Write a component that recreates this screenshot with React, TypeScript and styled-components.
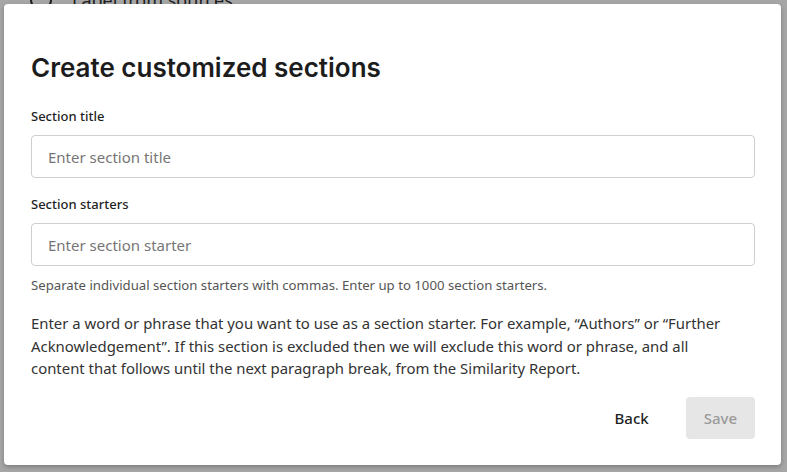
import React from "react";
import styled, { createGlobalStyle } from "styled-components";

const Global = createGlobalStyle`
  html, body { margin: 0; padding: 0; }
  body {
    width: 787px;
    height: 472px;
    overflow: hidden;
    background: #ffffff;
    font-family: "Noto Sans", "Open Sans", sans-serif;
  }
`;

const Page = styled.div`
  position: relative;
  width: 787px;
  height: 472px;
  overflow: hidden;
`;

const BackPage = styled.div`
  padding: 0 0 0 75px;
  margin-top: -12px;
  font-family: "Noto Sans", sans-serif;
  font-size: 18px;
  color: #333;
  display: flex;
  align-items: center;
  gap: 20px;
`;

const Radio = styled.span`
  width: 18px;
  height: 18px;
  border: 2px solid #333;
  border-radius: 50%;
  margin-left: -45px;
`;

const Overlay = styled.div`
  position: absolute;
  inset: 0;
  background: rgba(0, 0, 0, 0.35);
  display: flex;
  align-items: flex-start;
  justify-content: flex-start;
  padding: 4px 6px 7px 4px;
  box-sizing: border-box;
`;

const Dialog = styled.div`
  width: 777px;
  height: 461px;
  box-sizing: border-box;
  background: #fff;
  border-radius: 4px;
  box-shadow: 0 2px 4px rgba(0, 0, 0, 0.25);
  padding: 44px 26px 26px 27px;
  display: flex;
  flex-direction: column;
`;

const Title = styled.h1`
  margin: 0 0 19px;
  font-family: "Inter", "Lato", sans-serif;
  font-weight: 600;
  font-size: 26px;
  line-height: 40px;
  color: #1c1c1c;
  letter-spacing: 0;
`;

const Label = styled.label`
  display: block;
  font-size: 13px;
  font-weight: 500;
  line-height: 18px;
  color: #1f1f1f;
  margin-bottom: 10px;
`;

const Field = styled.div`
  display: flex;
  flex-direction: column;
  margin-bottom: 17px;
`;

const Input = styled.input`
  box-sizing: border-box;
  width: 100%;
  height: 43px;
  border: 1px solid #cfcfcf;
  border-radius: 4px;
  padding: 0 16px;
  font-family: "Noto Sans", sans-serif;
  font-size: 15px;
  color: #1f1f1f;
  outline: none;
  &::placeholder { color: #767676; }
`;

const Help = styled.p`
  margin: -7px 0 18px;
  font-size: 13.2px;
  line-height: 18px;
  color: #555;
`;

const Body = styled.p`
  margin: 0;
  max-width: 700px;
  font-size: 14.9px;
  line-height: 22.5px;
  color: #333;
`;

const Footer = styled.div`
  margin-top: auto;
  display: flex;
  justify-content: flex-end;
  align-items: center;
  gap: 19px;
`;

const Button = styled.button<{ $primary?: boolean }>`
  height: 42px;
  min-width: 69px;
  padding: 0 18px;
  border: none;
  border-radius: 4px;
  font-family: "Noto Sans", sans-serif;
  font-size: 15px;
  font-weight: 500;
  background: ${(p) => (p.$primary ? "#e6e6e6" : "transparent")};
  color: ${(p) => (p.$primary ? "#9a9a9a" : "#1f1f1f")};
  cursor: pointer;
`;

export default function App() {
  return (
    <Page>
      <Global />
      <BackPage>
        <Radio />
        <span>Label from sources</span>
      </BackPage>
      <Overlay>
        <Dialog>
          <Title>Create customized sections</Title>
          <Field>
            <Label>Section title</Label>
            <Input placeholder="Enter section title" />
          </Field>
          <Field>
            <Label>Section starters</Label>
            <Input placeholder="Enter section starter" />
          </Field>
          <Help>
            Separate individual section starters with commas. Enter up to 1000 section starters.
          </Help>
          <Body>
            Enter a word or phrase that you want to use as a section starter. For example,
            “Authors” or “Further Acknowledgement”. If this section is excluded then we will
            exclude this word or phrase, and all content that follows until the next paragraph
            break, from the Similarity Report.
          </Body>
          <Footer>
            <Button>Back</Button>
            <Button $primary disabled>
              Save
            </Button>
          </Footer>
        </Dialog>
      </Overlay>
    </Page>
  );
}
